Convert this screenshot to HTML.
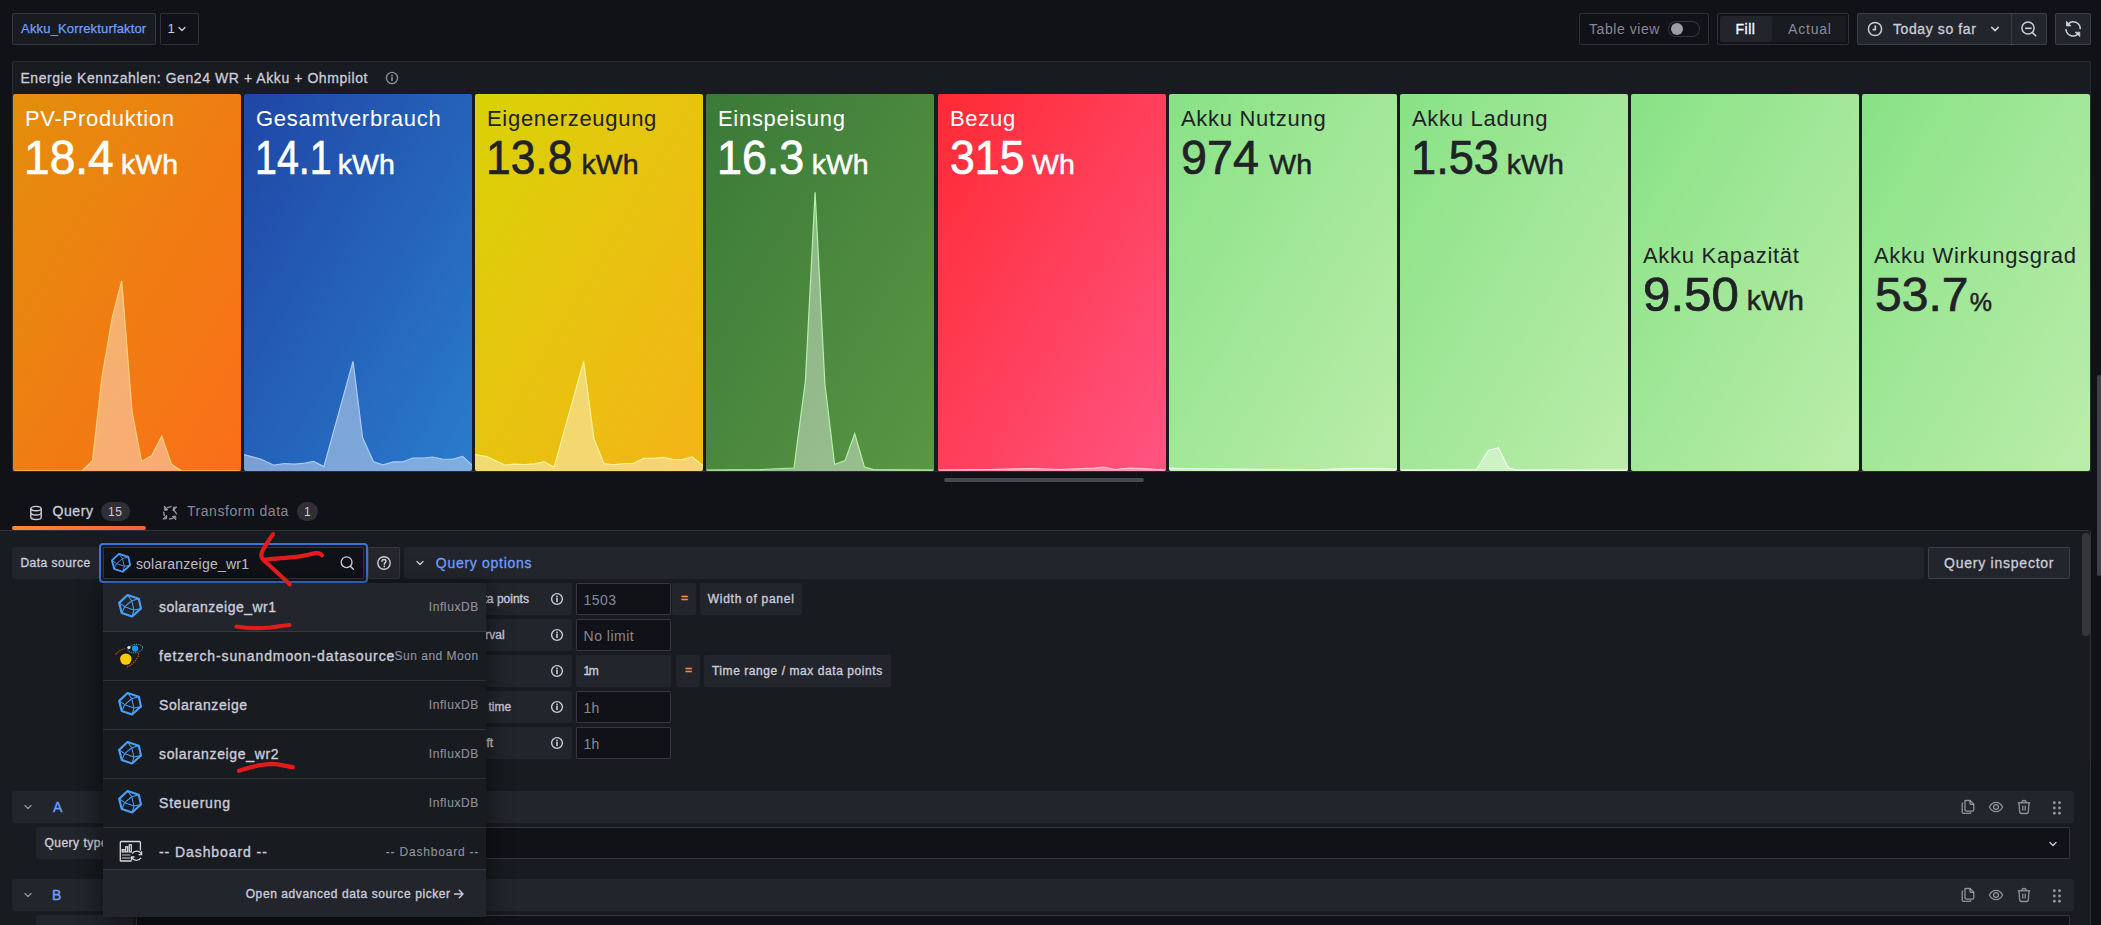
<!DOCTYPE html>
<html><head><meta charset="utf-8">
<style>
*{box-sizing:border-box;margin:0;padding:0}
html,body{width:2101px;height:925px;overflow:hidden;background:#111217;font-family:"Liberation Sans",sans-serif;color:#ccccdc}
.a{position:absolute}
.btn{position:absolute;border:1px solid rgba(204,204,220,0.16);border-radius:2px}
.stat{position:absolute;top:94px;height:377px;width:228px;border-radius:2px;overflow:hidden}
.stat .ti{position:absolute;left:12px;font-size:22px;letter-spacing:0.7px;white-space:nowrap}
.stat .va{position:absolute;font-size:48px;white-space:nowrap;transform-origin:0 0;-webkit-text-stroke:0.7px currentColor}
.stat .un{position:absolute;font-size:28.5px;white-space:nowrap;-webkit-text-stroke:0.5px currentColor}
.stat svg{position:absolute;left:0;top:0}
</style></head><body>
<div class="btn" style="left:12px;top:13px;width:144px;height:32px;background:#181b1f"></div>
<div class="a" style="left:21.10px;top:21.30px;font-size:13px;color:#6e9fff;white-space:nowrap;letter-spacing:0.158px;-webkit-text-stroke:0.25px #6e9fff;">Akku_Korrekturfaktor</div>
<div class="btn" style="left:160px;top:13px;width:39px;height:32px;background:#111217"></div>
<div class="a" style="left:167.60px;top:21.30px;font-size:13px;color:#ccccdc;white-space:nowrap;">1</div>
<div class="a" style="left:12px;top:61px;width:2079px;height:411px;background:#181b1f;border:1px solid rgba(204,204,220,0.10);border-radius:2px"></div>
<div class="a" style="left:20.40px;top:70.20px;font-size:14px;color:#ccccdc;white-space:nowrap;letter-spacing:0.569px;-webkit-text-stroke:0.3px #ccccdc;">Energie Kennzahlen: Gen24 WR + Akku + Ohmpilot</div>
<div class="btn" style="left:1579px;top:13px;width:130px;height:32px"></div>
<div class="a" style="left:1589.00px;top:21.00px;font-size:14px;color:rgba(204,204,220,0.65);white-space:nowrap;letter-spacing:0.556px;">Table view</div>
<div class="a" style="left:1668px;top:21px;width:32px;height:16px;border:1px solid rgba(204,204,220,0.2);border-radius:8px;background:#111217"></div>
<div class="a" style="left:1671px;top:23px;width:12px;height:12px;border-radius:6px;background:#9d9da8"></div>
<div class="btn" style="left:1717px;top:13px;width:132px;height:32px"></div>
<div class="a" style="left:1720px;top:16px;width:126px;height:26px;background:#181b1f;border-radius:2px"></div>
<div class="a" style="left:1720px;top:16px;width:52px;height:26px;background:#22252b;border-radius:2px"></div>
<div class="a" style="left:1735.60px;top:21.00px;font-size:14px;color:#ffffff;white-space:nowrap;letter-spacing:0.467px;-webkit-text-stroke:0.3px #ffffff;">Fill</div>
<div class="a" style="left:1788.00px;top:21.00px;font-size:14px;color:rgba(204,204,220,0.65);white-space:nowrap;letter-spacing:0.800px;">Actual</div>
<div class="btn" style="left:1857px;top:13px;width:190px;height:32px;background:#22252b"></div>
<div class="a" style="left:2011px;top:13px;width:1px;height:32px;background:rgba(204,204,220,0.12)"></div>
<div class="a" style="left:1893.00px;top:20.70px;font-size:14px;color:#ccccdc;white-space:nowrap;letter-spacing:0.600px;-webkit-text-stroke:0.3px #ccccdc;">Today so far</div>
<div class="btn" style="left:2055px;top:13px;width:36px;height:32px;background:#22252b"></div>
<div class="a" style="left:2097px;top:375px;width:4px;height:201px;border-radius:2px;background:rgba(204,204,220,0.25)"></div>
<div class="a" style="left:944px;top:478px;width:200px;height:4px;border-radius:2px;background:#47484d"></div>
<div class="stat" style="left:13px;background:linear-gradient(120deg,#e38e0b,#fb6e19)"><svg width="228" height="377"><polygon points="-1.0,377 -1.0,377.0 69.0,377.0 79.5,366.8 89.0,282.8 99.4,222.8 108.7,186.8 119.0,317.0 128.5,367.4 138.8,361.6 148.8,342.0 158.4,370.2 168.6,377.0 229.0,377.0 229.0,377" fill="rgba(255,255,255,0.4)"/><polyline points="-1.0,377.0 69.0,377.0 79.5,366.8 89.0,282.8 99.4,222.8 108.7,186.8 119.0,317.0 128.5,367.4 138.8,361.6 148.8,342.0 158.4,370.2 168.6,377.0 229.0,377.0" fill="none" stroke="#ffd27a" stroke-width="1.2"/></svg><div class="ti" style="top:12px;color:#fff">PV-Produktion</div><div class="va" style="left:10.62px;top:36.20px;color:#fff;transform:scaleX(0.9607)">18.4</div><div class="un" style="left:108.00px;top:53.91px;color:#fff;font-size:28.5px">kWh</div></div>
<div class="stat" style="left:244px;background:linear-gradient(120deg,#1f46a6,#2a7ccd)"><svg width="228" height="377"><polygon points="-1.0,377 -1.0,360.6 0.0,360.6 16.5,365.0 30.0,371.2 40.4,369.5 50.7,370.2 61.0,369.2 69.6,367.5 79.9,372.6 109.0,267.4 118.6,343.8 129.5,367.8 139.0,370.9 149.4,367.8 158.7,367.8 169.0,364.0 179.2,364.0 188.5,363.0 198.0,365.0 208.4,365.4 218.6,362.3 228.2,371.2 229.0,371.2 229.0,377" fill="rgba(255,255,255,0.4)"/><polyline points="-1.0,360.6 0.0,360.6 16.5,365.0 30.0,371.2 40.4,369.5 50.7,370.2 61.0,369.2 69.6,367.5 79.9,372.6 109.0,267.4 118.6,343.8 129.5,367.8 139.0,370.9 149.4,367.8 158.7,367.8 169.0,364.0 179.2,364.0 188.5,363.0 198.0,365.0 208.4,365.4 218.6,362.3 228.2,371.2 229.0,371.2" fill="none" stroke="#a9cdfb" stroke-width="1.2"/></svg><div class="ti" style="top:12px;color:#fff">Gesamtverbrauch</div><div class="va" style="left:10.54px;top:36.20px;color:#fff;transform:scaleX(0.8216)">14.1</div><div class="un" style="left:93.80px;top:53.91px;color:#fff;font-size:28.5px">kWh</div></div>
<div class="stat" style="left:475px;background:linear-gradient(120deg,#d9d206,#f5b418)"><svg width="228" height="377"><polygon points="-1.0,377 -1.0,360.6 0.3,360.6 11.7,362.6 30.5,371.2 39.0,370.2 49.3,370.5 59.6,369.8 69.2,367.8 79.1,373.3 108.6,267.4 118.9,344.5 128.8,369.5 138.4,370.9 148.7,369.5 158.3,369.5 168.6,364.4 178.9,364.4 188.1,363.3 197.7,365.4 207.0,365.7 217.2,363.0 227.5,371.2 229.0,371.2 229.0,377" fill="rgba(255,255,255,0.4)"/><polyline points="-1.0,360.6 0.3,360.6 11.7,362.6 30.5,371.2 39.0,370.2 49.3,370.5 59.6,369.8 69.2,367.8 79.1,373.3 108.6,267.4 118.9,344.5 128.8,369.5 138.4,370.9 148.7,369.5 158.3,369.5 168.6,364.4 178.9,364.4 188.1,363.3 197.7,365.4 207.0,365.7 217.2,363.0 227.5,371.2 229.0,371.2" fill="none" stroke="#fff39a" stroke-width="1.2"/></svg><div class="ti" style="top:12px;color:#202226">Eigenerzeugung</div><div class="va" style="left:11.13px;top:36.20px;color:#202226;transform:scaleX(0.9236)">13.8</div><div class="un" style="left:106.50px;top:53.91px;color:#202226;font-size:28.5px">kWh</div></div>
<div class="stat" style="left:706px;background:linear-gradient(120deg,#3a7a38,#5a9644)"><svg width="228" height="377"><polygon points="-1.0,377 -1.0,376.0 0.0,376.0 54.0,375.6 88.0,374.0 99.4,287.0 109.1,98.3 118.9,290.3 128.6,370.5 139.0,366.6 148.7,339.6 158.4,373.0 167.5,375.6 228.0,376.0 229.0,376.0 229.0,377" fill="rgba(255,255,255,0.4)"/><polyline points="-1.0,376.0 0.0,376.0 54.0,375.6 88.0,374.0 99.4,287.0 109.1,98.3 118.9,290.3 128.6,370.5 139.0,366.6 148.7,339.6 158.4,373.0 167.5,375.6 228.0,376.0 229.0,376.0" fill="none" stroke="#b4f2a8" stroke-width="1.2"/></svg><div class="ti" style="top:12px;color:#fff">Einspeisung</div><div class="va" style="left:10.80px;top:36.20px;color:#fff;transform:scaleX(0.9337)">16.3</div><div class="un" style="left:105.70px;top:53.91px;color:#fff;font-size:28.5px">kWh</div></div>
<div class="stat" style="left:938px;background:linear-gradient(120deg,#ff2a33,#ff5482)"><svg width="228" height="377"><polygon points="-1.0,377 -1.0,376.0 -1.0,376.0 52.0,375.5 92.0,374.5 122.0,375.5 157.0,374.0 165.0,373.0 177.0,375.5 192.0,374.0 212.0,375.0 228.0,376.0 229.0,376.0 229.0,377" fill="rgba(255,255,255,0.4)"/><polyline points="-1.0,376.0 -1.0,376.0 52.0,375.5 92.0,374.5 122.0,375.5 157.0,374.0 165.0,373.0 177.0,375.5 192.0,374.0 212.0,375.0 228.0,376.0 229.0,376.0" fill="none" stroke="#ffd0d8" stroke-width="1.2"/></svg><div class="ti" style="top:12px;color:#fff">Bezug</div><div class="va" style="left:11.64px;top:36.20px;color:#fff;transform:scaleX(0.9303)">315</div><div class="un" style="left:94.10px;top:53.91px;color:#fff;font-size:28.5px">Wh</div></div>
<div class="stat" style="left:1169px;background:linear-gradient(120deg,#88e286,#bcedaa)"><svg width="228" height="377"><polygon points="-1.0,377 -1.0,374.0 0.0,374.0 11.0,374.5 61.0,375.0 101.0,375.5 151.0,375.5 181.0,374.5 211.0,374.5 227.0,375.0 229.0,375.0 229.0,377" fill="rgba(255,255,255,0.4)"/><polyline points="-1.0,374.0 0.0,374.0 11.0,374.5 61.0,375.0 101.0,375.5 151.0,375.5 181.0,374.5 211.0,374.5 227.0,375.0 229.0,375.0" fill="none" stroke="#f4fff0" stroke-width="1.2"/></svg><div class="ti" style="top:12px;color:#202226">Akku Nutzung</div><div class="va" style="left:12.15px;top:36.20px;color:#202226;transform:scaleX(0.9727)">974</div><div class="un" style="left:100.30px;top:53.91px;color:#202226;font-size:28.5px">Wh</div></div>
<div class="stat" style="left:1400px;background:linear-gradient(120deg,#88e286,#bcedaa)"><svg width="228" height="377"><polygon points="-1.0,377 -1.0,376.2 0.0,376.2 20.0,376.2 76.7,375.5 88.4,356.2 98.4,353.9 108.4,373.9 116.8,376.2 227.0,376.2 229.0,376.2 229.0,377" fill="rgba(255,255,255,0.4)"/><polyline points="-1.0,376.2 0.0,376.2 20.0,376.2 76.7,375.5 88.4,356.2 98.4,353.9 108.4,373.9 116.8,376.2 227.0,376.2 229.0,376.2" fill="none" stroke="#f4fff0" stroke-width="1.2"/></svg><div class="ti" style="top:12px;color:#202226">Akku Ladung</div><div class="va" style="left:10.68px;top:36.20px;color:#202226;transform:scaleX(0.9416)">1.53</div><div class="un" style="left:106.80px;top:53.91px;color:#202226;font-size:28.5px">kWh</div></div>
<div class="stat" style="left:1631px;background:linear-gradient(120deg,#88e286,#bcedaa)"><div class="ti" style="top:149px;color:#202226">Akku Kapazität</div><div class="va" style="left:12.15px;top:172.70px;color:#202226;transform:scaleX(1.0267)">9.50</div><div class="un" style="left:115.80px;top:190.41px;color:#202226;font-size:28.5px">kWh</div></div>
<div class="stat" style="left:1862px;background:linear-gradient(120deg,#88e286,#bcedaa)"><div class="ti" style="top:149px;color:#202226">Akku Wirkungsgrad</div><div class="va" style="left:13.10px;top:172.80px;color:#202226;transform:scaleX(1.0000)">53.7</div><div class="un" style="left:107.80px;top:193.68px;color:#202226;font-size:25px">%</div></div>
<div class="a" style="left:0;top:530px;width:2091px;height:395px;background:#181b1f;border-top:1px solid rgba(204,204,220,0.12);border-right:1px solid rgba(204,204,220,0.12);border-top-right-radius:2px"></div>
<div class="a" style="left:12px;top:526px;width:134px;height:4px;border-radius:2px;background:linear-gradient(90deg,#ff8833,#f55f3e)"></div>
<div class="a" style="left:52.40px;top:502.50px;font-size:14px;color:#ccccdc;white-space:nowrap;letter-spacing:0.600px;-webkit-text-stroke:0.3px #ccccdc;">Query</div>
<div class="a" style="left:101px;top:502px;width:29px;height:19px;border-radius:10px;background:rgba(204,204,220,0.16)"></div>
<div class="a" style="left:108.00px;top:505.40px;font-size:12px;color:#ccccdc;white-space:nowrap;letter-spacing:0.500px;">15</div>
<div class="a" style="left:187.00px;top:502.50px;font-size:14px;color:rgba(204,204,220,0.65);white-space:nowrap;letter-spacing:0.538px;">Transform data</div>
<div class="a" style="left:297px;top:502px;width:21px;height:19px;border-radius:10px;background:rgba(204,204,220,0.16)"></div>
<div class="a" style="left:304.00px;top:505.40px;font-size:12px;color:#ccccdc;white-space:nowrap;">1</div>
<div class="a" style="left:12px;top:547px;width:87px;height:32px;background:#22252b;border-radius:2px"></div>
<div class="a" style="left:20.40px;top:556.00px;font-size:12px;color:#ccccdc;white-space:nowrap;letter-spacing:0.500px;-webkit-text-stroke:0.35px #ccccdc;">Data source</div>
<div class="a" style="left:99px;top:543px;width:269px;height:40px;border:2px solid #3d71d9;border-radius:4px"></div>
<div class="a" style="left:103px;top:547px;width:261px;height:32px;background:#111217;border:1px solid rgba(204,204,220,0.2);border-radius:2px"></div>
<div class="a" style="left:135.90px;top:555.60px;font-size:14px;color:#c0c0cc;white-space:nowrap;letter-spacing:0.220px;">solaranzeige_wr1</div>
<div class="btn" style="left:368px;top:547px;width:32px;height:32px;background:#25272d;border-color:rgba(204,204,220,0.10)"></div>
<div class="a" style="left:404px;top:547px;width:1520px;height:32px;background:#22252b;border-radius:2px"></div>
<div class="a" style="left:435.80px;top:555.00px;font-size:14px;color:#6e9fff;white-space:nowrap;letter-spacing:0.717px;-webkit-text-stroke:0.3px #6e9fff;">Query options</div>
<div class="btn" style="left:1928px;top:547px;width:142px;height:32px;background:#22252b"></div>
<div class="a" style="left:1944.00px;top:555.00px;font-size:14px;color:#ccccdc;white-space:nowrap;letter-spacing:0.764px;-webkit-text-stroke:0.3px #ccccdc;">Query inspector</div>
<div class="a" style="left:2082px;top:533px;width:8px;height:103px;border-radius:4px;background:rgba(204,204,220,0.16)"></div>
<div class="a" style="left:404px;top:583px;width:168px;height:32px;background:#22252b;border-radius:2px"></div>
<div class="a" style="left:444.20px;top:592.20px;font-size:12px;color:#ccccdc;white-space:nowrap;-webkit-text-stroke:0.35px #ccccdc;">Max data points</div>
<div class="a" style="left:576px;top:583px;width:95px;height:32px;background:#111217;border:1px solid rgba(204,204,220,0.2);border-radius:2px"></div>
<div class="a" style="left:583.60px;top:591.50px;font-size:14px;color:rgba(204,204,220,0.65);white-space:nowrap;letter-spacing:0.433px;">1503</div>
<div class="a" style="left:672px;top:583px;width:24px;height:32px;background:#22252b;border-radius:2px"></div>
<div class="a" style="left:681.00px;top:591.20px;font-size:12px;color:#ff8833;white-space:nowrap;-webkit-text-stroke:0.4px #ff8833;">=</div>
<div class="a" style="left:700px;top:583px;width:102px;height:32px;background:#22252b;border-radius:2px"></div>
<div class="a" style="left:707.80px;top:592.20px;font-size:12px;color:#ccccdc;white-space:nowrap;letter-spacing:0.715px;-webkit-text-stroke:0.35px #ccccdc;">Width of panel</div>
<div class="a" style="left:404px;top:619px;width:168px;height:32px;background:#22252b;border-radius:2px"></div>
<div class="a" style="left:443.30px;top:628.20px;font-size:12px;color:#ccccdc;white-space:nowrap;-webkit-text-stroke:0.35px #ccccdc;">Min interval</div>
<div class="a" style="left:576px;top:619px;width:95px;height:32px;background:#111217;border:1px solid rgba(204,204,220,0.2);border-radius:2px"></div>
<div class="a" style="left:583.60px;top:627.50px;font-size:14px;color:rgba(204,204,220,0.65);white-space:nowrap;letter-spacing:0.486px;">No limit</div>
<div class="a" style="left:404px;top:655px;width:168px;height:32px;background:#22252b;border-radius:2px"></div>
<div class="a" style="left:441.00px;top:664.20px;font-size:12px;color:#ccccdc;white-space:nowrap;-webkit-text-stroke:0.35px #ccccdc;">Interval</div>
<div class="a" style="left:576px;top:655px;width:95px;height:32px;background:#22252b;border-radius:2px"></div>
<div class="a" style="left:583.50px;top:664.20px;font-size:12px;color:#ccccdc;white-space:nowrap;letter-spacing:-1.500px;-webkit-text-stroke:0.35px #ccccdc;">1m</div>
<div class="a" style="left:676px;top:655px;width:24px;height:32px;background:#22252b;border-radius:2px"></div>
<div class="a" style="left:685.00px;top:663.20px;font-size:12px;color:#ff8833;white-space:nowrap;-webkit-text-stroke:0.4px #ff8833;">=</div>
<div class="a" style="left:704px;top:655px;width:187px;height:32px;background:#22252b;border-radius:2px"></div>
<div class="a" style="left:711.90px;top:664.20px;font-size:12px;color:#ccccdc;white-space:nowrap;letter-spacing:0.567px;-webkit-text-stroke:0.35px #ccccdc;">Time range / max data points</div>
<div class="a" style="left:404px;top:691px;width:168px;height:32px;background:#22252b;border-radius:2px"></div>
<div class="a" style="left:441.80px;top:700.20px;font-size:12px;color:#ccccdc;white-space:nowrap;-webkit-text-stroke:0.35px #ccccdc;">Relative time</div>
<div class="a" style="left:576px;top:691px;width:95px;height:32px;background:#111217;border:1px solid rgba(204,204,220,0.2);border-radius:2px"></div>
<div class="a" style="left:583.60px;top:699.50px;font-size:14px;color:rgba(204,204,220,0.65);white-space:nowrap;">1h</div>
<div class="a" style="left:404px;top:727px;width:168px;height:32px;background:#22252b;border-radius:2px"></div>
<div class="a" style="left:441.50px;top:736.20px;font-size:12px;color:#ccccdc;white-space:nowrap;-webkit-text-stroke:0.35px #ccccdc;">Time shift</div>
<div class="a" style="left:576px;top:727px;width:95px;height:32px;background:#111217;border:1px solid rgba(204,204,220,0.2);border-radius:2px"></div>
<div class="a" style="left:583.60px;top:735.50px;font-size:14px;color:rgba(204,204,220,0.65);white-space:nowrap;">1h</div>
<div class="a" style="left:12px;top:791px;width:2062px;height:32px;background:#22252b;border-radius:2px"></div>
<div class="a" style="left:53.00px;top:798.90px;font-size:14px;color:#6e9fff;white-space:nowrap;-webkit-text-stroke:0.4px #6e9fff;">A</div>
<div class="a" style="left:36px;top:827px;width:97px;height:32px;background:#22252b;border-radius:2px"></div>
<div class="a" style="left:136px;top:827px;width:1934px;height:32px;background:#111217;border:1px solid rgba(204,204,220,0.2);border-radius:2px"></div>
<div class="a" style="left:12px;top:879px;width:2062px;height:32px;background:#22252b;border-radius:2px"></div>
<div class="a" style="left:52.00px;top:886.80px;font-size:14px;color:#6e9fff;white-space:nowrap;-webkit-text-stroke:0.4px #6e9fff;">B</div>
<div class="a" style="left:36px;top:915px;width:97px;height:32px;background:#22252b;border-radius:2px"></div>
<div class="a" style="left:136px;top:915px;width:1934px;height:32px;background:#111217;border:1px solid rgba(204,204,220,0.2);border-radius:2px"></div>
<div class="a" style="left:44.40px;top:836.00px;font-size:12px;color:#ccccdc;white-space:nowrap;letter-spacing:0.511px;-webkit-text-stroke:0.35px #ccccdc;">Query type</div>
<div class="a" style="left:103px;top:583px;width:383px;height:334px;background:#181b1f;box-shadow:0 4px 24px rgba(0,0,0,0.6);overflow:hidden;border-radius:2px">
<div class="a" style="left:0;top:0px;width:383px;height:49px;background:#22252b;border-bottom:1px solid rgba(204,204,220,0.12)"></div>
<svg class="a" style="left:15px;top:11px" width="24" height="24" viewBox="-0.5 -0.5 21 21" fill="none"><polygon points="7.9,0.4 17.7,3.6 19.6,12.2 11.8,19.2 2.8,16.1 0.5,7.3" stroke="#4a9ff5" stroke-width="1.9" stroke-linejoin="round"/><line x1="7.9" y1="0.4" x2="11.5" y2="5.4" stroke="#4a9ff5" stroke-width="0.9"/><line x1="17.7" y1="3.6" x2="11.5" y2="5.4" stroke="#4a9ff5" stroke-width="0.9"/><line x1="11.5" y1="5.4" x2="5.4" y2="10.6" stroke="#4a9ff5" stroke-width="0.9"/><line x1="11.5" y1="5.4" x2="13.5" y2="13.5" stroke="#4a9ff5" stroke-width="0.9"/><line x1="5.4" y1="10.6" x2="13.5" y2="13.5" stroke="#4a9ff5" stroke-width="0.9"/><line x1="0.5" y1="7.3" x2="5.4" y2="10.6" stroke="#4a9ff5" stroke-width="0.9"/><line x1="5.4" y1="10.6" x2="2.8" y2="16.1" stroke="#4a9ff5" stroke-width="0.9"/><line x1="13.5" y1="13.5" x2="19.6" y2="12.2" stroke="#4a9ff5" stroke-width="0.9"/><line x1="13.5" y1="13.5" x2="11.8" y2="19.2" stroke="#4a9ff5" stroke-width="0.9"/></svg>
<div class="a" style="left:56.00px;top:16.10px;font-size:14px;color:#ccccdc;white-space:nowrap;letter-spacing:0.487px;-webkit-text-stroke:0.35px #ccccdc;">solaranzeige_wr1</div>
<div class="a" style="left:325.70px;top:17.20px;font-size:12px;color:rgba(204,204,220,0.65);white-space:nowrap;letter-spacing:0.614px;-webkit-text-stroke:0.15px rgba(204,204,220,0.65);">InfluxDB</div>
<div class="a" style="left:0;top:49px;width:383px;height:49px;background:transparent;border-bottom:1px solid rgba(204,204,220,0.12)"></div>
<svg class="a" style="left:11px;top:57px" width="34" height="30" viewBox="0 0 34 30" fill="none"><path d="M1.6,14.3 C4,11.5 7,9.6 10.6,8.6" stroke="#c75a0a" stroke-width="1.2" stroke-dasharray="1.4 1.1"/><path d="M24.6,13.2 C24.5,18 20,24 12.3,27.6" stroke="#c75a0a" stroke-width="1.2" stroke-dasharray="1.4 1.1"/><ellipse cx="21.3" cy="8.6" rx="7.4" ry="4.1" transform="rotate(-10 21.3 8.6)" stroke="#3a8aa8" stroke-width="1.1" stroke-dasharray="1.3 0.9"/><circle cx="11.8" cy="19.1" r="5.7" fill="#ffcb00"/><circle cx="21.1" cy="8.6" r="3.1" fill="#0a9cf6"/><circle cx="14.9" cy="7.5" r="1.6" fill="#e8e8e8"/></svg>
<div class="a" style="left:56.00px;top:65.10px;font-size:14px;color:#ccccdc;white-space:nowrap;letter-spacing:0.897px;-webkit-text-stroke:0.35px #ccccdc;">fetzerch-sunandmoon-datasource</div>
<div class="a" style="left:291.60px;top:66.20px;font-size:12px;color:rgba(204,204,220,0.65);white-space:nowrap;letter-spacing:0.491px;-webkit-text-stroke:0.15px rgba(204,204,220,0.65);">Sun and Moon</div>
<div class="a" style="left:0;top:98px;width:383px;height:49px;background:transparent;border-bottom:1px solid rgba(204,204,220,0.12)"></div>
<svg class="a" style="left:15px;top:109px" width="24" height="24" viewBox="-0.5 -0.5 21 21" fill="none"><polygon points="7.9,0.4 17.7,3.6 19.6,12.2 11.8,19.2 2.8,16.1 0.5,7.3" stroke="#4a9ff5" stroke-width="1.9" stroke-linejoin="round"/><line x1="7.9" y1="0.4" x2="11.5" y2="5.4" stroke="#4a9ff5" stroke-width="0.9"/><line x1="17.7" y1="3.6" x2="11.5" y2="5.4" stroke="#4a9ff5" stroke-width="0.9"/><line x1="11.5" y1="5.4" x2="5.4" y2="10.6" stroke="#4a9ff5" stroke-width="0.9"/><line x1="11.5" y1="5.4" x2="13.5" y2="13.5" stroke="#4a9ff5" stroke-width="0.9"/><line x1="5.4" y1="10.6" x2="13.5" y2="13.5" stroke="#4a9ff5" stroke-width="0.9"/><line x1="0.5" y1="7.3" x2="5.4" y2="10.6" stroke="#4a9ff5" stroke-width="0.9"/><line x1="5.4" y1="10.6" x2="2.8" y2="16.1" stroke="#4a9ff5" stroke-width="0.9"/><line x1="13.5" y1="13.5" x2="19.6" y2="12.2" stroke="#4a9ff5" stroke-width="0.9"/><line x1="13.5" y1="13.5" x2="11.8" y2="19.2" stroke="#4a9ff5" stroke-width="0.9"/></svg>
<div class="a" style="left:56.00px;top:114.10px;font-size:14px;color:#ccccdc;white-space:nowrap;letter-spacing:0.582px;-webkit-text-stroke:0.35px #ccccdc;">Solaranzeige</div>
<div class="a" style="left:325.70px;top:115.20px;font-size:12px;color:rgba(204,204,220,0.65);white-space:nowrap;letter-spacing:0.614px;-webkit-text-stroke:0.15px rgba(204,204,220,0.65);">InfluxDB</div>
<div class="a" style="left:0;top:147px;width:383px;height:49px;background:transparent;border-bottom:1px solid rgba(204,204,220,0.12)"></div>
<svg class="a" style="left:15px;top:158px" width="24" height="24" viewBox="-0.5 -0.5 21 21" fill="none"><polygon points="7.9,0.4 17.7,3.6 19.6,12.2 11.8,19.2 2.8,16.1 0.5,7.3" stroke="#4a9ff5" stroke-width="1.9" stroke-linejoin="round"/><line x1="7.9" y1="0.4" x2="11.5" y2="5.4" stroke="#4a9ff5" stroke-width="0.9"/><line x1="17.7" y1="3.6" x2="11.5" y2="5.4" stroke="#4a9ff5" stroke-width="0.9"/><line x1="11.5" y1="5.4" x2="5.4" y2="10.6" stroke="#4a9ff5" stroke-width="0.9"/><line x1="11.5" y1="5.4" x2="13.5" y2="13.5" stroke="#4a9ff5" stroke-width="0.9"/><line x1="5.4" y1="10.6" x2="13.5" y2="13.5" stroke="#4a9ff5" stroke-width="0.9"/><line x1="0.5" y1="7.3" x2="5.4" y2="10.6" stroke="#4a9ff5" stroke-width="0.9"/><line x1="5.4" y1="10.6" x2="2.8" y2="16.1" stroke="#4a9ff5" stroke-width="0.9"/><line x1="13.5" y1="13.5" x2="19.6" y2="12.2" stroke="#4a9ff5" stroke-width="0.9"/><line x1="13.5" y1="13.5" x2="11.8" y2="19.2" stroke="#4a9ff5" stroke-width="0.9"/></svg>
<div class="a" style="left:56.00px;top:163.10px;font-size:14px;color:#ccccdc;white-space:nowrap;letter-spacing:0.653px;-webkit-text-stroke:0.35px #ccccdc;">solaranzeige_wr2</div>
<div class="a" style="left:325.70px;top:164.20px;font-size:12px;color:rgba(204,204,220,0.65);white-space:nowrap;letter-spacing:0.614px;-webkit-text-stroke:0.15px rgba(204,204,220,0.65);">InfluxDB</div>
<div class="a" style="left:0;top:196px;width:383px;height:49px;background:transparent;border-bottom:1px solid rgba(204,204,220,0.12)"></div>
<svg class="a" style="left:15px;top:207px" width="24" height="24" viewBox="-0.5 -0.5 21 21" fill="none"><polygon points="7.9,0.4 17.7,3.6 19.6,12.2 11.8,19.2 2.8,16.1 0.5,7.3" stroke="#4a9ff5" stroke-width="1.9" stroke-linejoin="round"/><line x1="7.9" y1="0.4" x2="11.5" y2="5.4" stroke="#4a9ff5" stroke-width="0.9"/><line x1="17.7" y1="3.6" x2="11.5" y2="5.4" stroke="#4a9ff5" stroke-width="0.9"/><line x1="11.5" y1="5.4" x2="5.4" y2="10.6" stroke="#4a9ff5" stroke-width="0.9"/><line x1="11.5" y1="5.4" x2="13.5" y2="13.5" stroke="#4a9ff5" stroke-width="0.9"/><line x1="5.4" y1="10.6" x2="13.5" y2="13.5" stroke="#4a9ff5" stroke-width="0.9"/><line x1="0.5" y1="7.3" x2="5.4" y2="10.6" stroke="#4a9ff5" stroke-width="0.9"/><line x1="5.4" y1="10.6" x2="2.8" y2="16.1" stroke="#4a9ff5" stroke-width="0.9"/><line x1="13.5" y1="13.5" x2="19.6" y2="12.2" stroke="#4a9ff5" stroke-width="0.9"/><line x1="13.5" y1="13.5" x2="11.8" y2="19.2" stroke="#4a9ff5" stroke-width="0.9"/></svg>
<div class="a" style="left:56.00px;top:212.10px;font-size:14px;color:#ccccdc;white-space:nowrap;letter-spacing:0.812px;-webkit-text-stroke:0.35px #ccccdc;">Steuerung</div>
<div class="a" style="left:325.70px;top:213.20px;font-size:12px;color:rgba(204,204,220,0.65);white-space:nowrap;letter-spacing:0.614px;-webkit-text-stroke:0.15px rgba(204,204,220,0.65);">InfluxDB</div>
<div class="a" style="left:0;top:245px;width:383px;height:49px;background:transparent;border-bottom:1px solid rgba(204,204,220,0.12)"></div>
<svg class="a" style="left:16px;top:257px" width="24" height="24" viewBox="0 0 24 24" fill="none"><path d="M1.3,21.3 V2.5 C1.3,1.9 1.8,1.5 2.3,1.5 H20.5 C21,1.5 21.4,1.9 21.4,2.4 V10.5" stroke="#d8d8e0" stroke-width="1.3"/><line x1="1.3" y1="21" x2="12.5" y2="21" stroke="#d8d8e0" stroke-width="1.3"/><g stroke="#d8d8e0" stroke-width="1.3"><rect x="3.2" y="9.6" width="1.9" height="2.3"/><rect x="6.7" y="6.8" width="2" height="5.1"/><rect x="10.3" y="4.8" width="2" height="7.1"/></g><line x1="3" y1="15" x2="11.5" y2="15" stroke="#bbb" stroke-width="1.2"/><line x1="3" y1="18" x2="11.5" y2="18" stroke="#d8d8e0" stroke-width="1.2"/><path d="M13.2,13.6 A5.3,5.3 0 0 1 22.3,13.8" stroke="#d8d8e0" stroke-width="1.3"/><polyline points="22.6,11.3 22.6,14.6 19.6,14.6" stroke="#d8d8e0" stroke-width="1.3"/><path d="M21.9,17.8 A5.3,5.3 0 0 1 12.8,17.6" stroke="#d8d8e0" stroke-width="1.3"/><polyline points="12.5,20.4 12.5,17 15.5,17" stroke="#d8d8e0" stroke-width="1.3"/></svg>
<div class="a" style="left:56.00px;top:261.10px;font-size:14px;color:#ccccdc;white-space:nowrap;letter-spacing:0.921px;-webkit-text-stroke:0.35px #ccccdc;">-- Dashboard --</div>
<div class="a" style="left:282.80px;top:262.20px;font-size:12px;color:rgba(204,204,220,0.65);white-space:nowrap;letter-spacing:0.800px;-webkit-text-stroke:0.15px rgba(204,204,220,0.65);">-- Dashboard --</div>
<div class="a" style="left:0;top:286px;width:383px;height:48px;background:#22252b;border-top:1px solid rgba(204,204,220,0.12)"></div>
<div class="a" style="left:142.70px;top:304.00px;font-size:12px;color:#ccccdc;white-space:nowrap;letter-spacing:0.590px;-webkit-text-stroke:0.35px #ccccdc;">Open advanced data source picker</div>
<svg class="a" style="left:350px;top:305px" width="12" height="12" viewBox="0 0 12 12" fill="none"><path d="M1.5,6 H9.8 M6.3,2.3 L10,6 L6.3,9.7" stroke="#ccccdc" stroke-width="1.4" stroke-linecap="round" stroke-linejoin="round"/></svg>
</div>
<svg class="a" style="left:174px;top:21px" width="16" height="16" viewBox="0 0 16 16" fill="none"><polyline points="5.0,6.5 8,9.5 11.0,6.5" stroke="#ccccdc" stroke-width="1.3" stroke-linecap="round" stroke-linejoin="round"/></svg>
<svg class="a" style="left:384px;top:70px" width="16" height="16" viewBox="0 0 16 16" fill="none"><circle cx="8" cy="8" r="5.6" stroke="rgba(204,204,220,0.65)" stroke-width="1.4"/><line x1="8" y1="7.6" x2="8" y2="10.4" stroke="rgba(204,204,220,0.65)" stroke-width="1.6" stroke-linecap="round"/><circle cx="8" cy="5.5" r="0.9" fill="rgba(204,204,220,0.65)"/></svg>
<svg class="a" style="left:1867px;top:21px" width="16" height="16" viewBox="0 0 16 16" fill="none"><circle cx="8" cy="8" r="6.6" stroke="#ccccdc" stroke-width="1.5"/><polyline points="8.3,4.4 8.3,8.6 5.6,8.6" stroke="#ccccdc" stroke-width="1.7" stroke-linejoin="round"/></svg>
<svg class="a" style="left:1987px;top:21px" width="16" height="16" viewBox="0 0 16 16" fill="none"><polyline points="4.75,6.35 8,9.65 11.25,6.35" stroke="#ccccdc" stroke-width="1.5" stroke-linecap="round" stroke-linejoin="round"/></svg>
<svg class="a" style="left:2020px;top:20px" width="18" height="18" viewBox="0 0 18 18" fill="none"><circle cx="8" cy="8" r="6.1" stroke="#ccccdc" stroke-width="1.5"/><line x1="5" y1="8.3" x2="11.6" y2="8.3" stroke="#ccccdc" stroke-width="1.6"/><line x1="12.5" y1="12.6" x2="15.7" y2="15.8" stroke="#ccccdc" stroke-width="1.6" stroke-linecap="round"/></svg>
<svg class="a" style="left:2060px;top:16px" width="28" height="26" viewBox="0 0 28 26" fill="none"><path d="M8.25,7.85 A7,7 0 0 1 20.2,13.2" stroke="#ccccdc" stroke-width="1.5"/><path d="M5.9,13 A7.2,7.2 0 0 0 18.3,17.8" stroke="#ccccdc" stroke-width="1.5"/><polygon points="6.4,5.3 6.4,9.9 11,9.9" fill="#ccccdc" stroke="#ccccdc" stroke-width="0.8" stroke-linejoin="round"/><polygon points="19.8,20.6 19.8,16.2 15.2,16.2" fill="#ccccdc" stroke="#ccccdc" stroke-width="0.8" stroke-linejoin="round"/></svg>
<svg class="a" style="left:29px;top:505px" width="14" height="16" viewBox="0 0 14 16" fill="none"><ellipse cx="7" cy="3.6" rx="5.2" ry="2.2" stroke="#ccccdc" stroke-width="1.4"/><path d="M1.8,3.6 V12.2 C1.8,13.6 4,14.5 7,14.5 C10,14.5 12.2,13.6 12.2,12.2 V3.6" stroke="#ccccdc" stroke-width="1.4"/><path d="M1.8,7.8 C1.8,9.2 4,10 7,10 C10,10 12.2,9.2 12.2,7.8" stroke="#ccccdc" stroke-width="1.3"/><circle cx="3.8" cy="9" r="0.6" fill="#ccccdc"/><circle cx="3.8" cy="13" r="0.6" fill="#ccccdc"/></svg>
<svg class="a" style="left:158px;top:502px" width="24" height="22" viewBox="0 0 24 22" fill="none"><g stroke="rgba(204,204,220,0.65)" stroke-width="1.5" stroke-linecap="round" fill="rgba(204,204,220,0.65)"><line x1="9.5" y1="5.6" x2="13" y2="4.6"/><polygon points="6.6,4.2 9.8,7.8 6.9,8.4" stroke-width="0.9" stroke-linejoin="round"/><line x1="16" y1="8.2" x2="18.4" y2="11.6"/><polygon points="18.6,5.3 15,8.8 15.4,5.6" stroke-width="0.9" stroke-linejoin="round"/><line x1="5.6" y1="10.3" x2="6.4" y2="13.6"/><polygon points="5.2,16.8 8.8,13.3 8.5,16.6" stroke-width="0.9" stroke-linejoin="round"/><line x1="11.6" y1="17" x2="15" y2="16.2"/><polygon points="17.6,17.6 14.3,14.4 17.3,14" stroke-width="0.9" stroke-linejoin="round"/></g></svg>
<svg class="a" style="left:110.5px;top:552.5px" width="20" height="20" viewBox="-0.5 -0.5 21 21" fill="none"><polygon points="7.9,0.4 17.7,3.6 19.6,12.2 11.8,19.2 2.8,16.1 0.5,7.3" stroke="#4a9ff5" stroke-width="1.9" stroke-linejoin="round"/><line x1="7.9" y1="0.4" x2="11.5" y2="5.4" stroke="#4a9ff5" stroke-width="0.9"/><line x1="17.7" y1="3.6" x2="11.5" y2="5.4" stroke="#4a9ff5" stroke-width="0.9"/><line x1="11.5" y1="5.4" x2="5.4" y2="10.6" stroke="#4a9ff5" stroke-width="0.9"/><line x1="11.5" y1="5.4" x2="13.5" y2="13.5" stroke="#4a9ff5" stroke-width="0.9"/><line x1="5.4" y1="10.6" x2="13.5" y2="13.5" stroke="#4a9ff5" stroke-width="0.9"/><line x1="0.5" y1="7.3" x2="5.4" y2="10.6" stroke="#4a9ff5" stroke-width="0.9"/><line x1="5.4" y1="10.6" x2="2.8" y2="16.1" stroke="#4a9ff5" stroke-width="0.9"/><line x1="13.5" y1="13.5" x2="19.6" y2="12.2" stroke="#4a9ff5" stroke-width="0.9"/><line x1="13.5" y1="13.5" x2="11.8" y2="19.2" stroke="#4a9ff5" stroke-width="0.9"/></svg>
<svg class="a" style="left:339px;top:555px" width="16" height="16" viewBox="0 0 16 16" fill="none"><circle cx="7.6" cy="7.2" r="5.4" stroke="#ccccdc" stroke-width="1.3"/><line x1="11.6" y1="11.4" x2="14.4" y2="14.2" stroke="#ccccdc" stroke-width="1.4" stroke-linecap="round"/></svg>
<svg class="a" style="left:376px;top:555px" width="16" height="16" viewBox="0 0 16 16" fill="none"><circle cx="8" cy="8" r="6.2" stroke="#ccccdc" stroke-width="1.4"/><path d="M6,6.4 C6,5.1 7,4.5 8,4.5 C9.1,4.5 10,5.2 10,6.3 C10,7.6 8.3,7.7 8.3,9.2" stroke="#ccccdc" stroke-width="1.4" stroke-linecap="round"/><circle cx="8.3" cy="11.3" r="0.85" fill="#ccccdc"/></svg>
<svg class="a" style="left:412px;top:555px" width="16" height="16" viewBox="0 0 16 16" fill="none"><polyline points="5.0,6.5 8,9.5 11.0,6.5" stroke="#ccccdc" stroke-width="1.3" stroke-linecap="round" stroke-linejoin="round"/></svg>
<svg class="a" style="left:549px;top:591px" width="16" height="16" viewBox="0 0 16 16" fill="none"><circle cx="8" cy="8" r="5.4" stroke="#ccccdc" stroke-width="1.4"/><line x1="8" y1="7.6" x2="8" y2="10.4" stroke="#ccccdc" stroke-width="1.6" stroke-linecap="round"/><circle cx="8" cy="5.5" r="0.9" fill="#ccccdc"/></svg>
<svg class="a" style="left:549px;top:627px" width="16" height="16" viewBox="0 0 16 16" fill="none"><circle cx="8" cy="8" r="5.4" stroke="#ccccdc" stroke-width="1.4"/><line x1="8" y1="7.6" x2="8" y2="10.4" stroke="#ccccdc" stroke-width="1.6" stroke-linecap="round"/><circle cx="8" cy="5.5" r="0.9" fill="#ccccdc"/></svg>
<svg class="a" style="left:549px;top:663px" width="16" height="16" viewBox="0 0 16 16" fill="none"><circle cx="8" cy="8" r="5.4" stroke="#ccccdc" stroke-width="1.4"/><line x1="8" y1="7.6" x2="8" y2="10.4" stroke="#ccccdc" stroke-width="1.6" stroke-linecap="round"/><circle cx="8" cy="5.5" r="0.9" fill="#ccccdc"/></svg>
<svg class="a" style="left:549px;top:699px" width="16" height="16" viewBox="0 0 16 16" fill="none"><circle cx="8" cy="8" r="5.4" stroke="#ccccdc" stroke-width="1.4"/><line x1="8" y1="7.6" x2="8" y2="10.4" stroke="#ccccdc" stroke-width="1.6" stroke-linecap="round"/><circle cx="8" cy="5.5" r="0.9" fill="#ccccdc"/></svg>
<svg class="a" style="left:549px;top:735px" width="16" height="16" viewBox="0 0 16 16" fill="none"><circle cx="8" cy="8" r="5.4" stroke="#ccccdc" stroke-width="1.4"/><line x1="8" y1="7.6" x2="8" y2="10.4" stroke="#ccccdc" stroke-width="1.6" stroke-linecap="round"/><circle cx="8" cy="5.5" r="0.9" fill="#ccccdc"/></svg>
<svg class="a" style="left:20px;top:799px" width="16" height="16" viewBox="0 0 16 16" fill="none"><polyline points="5.0,6.5 8,9.5 11.0,6.5" stroke="rgba(204,204,220,0.65)" stroke-width="1.3" stroke-linecap="round" stroke-linejoin="round"/></svg>
<svg class="a" style="left:1960px;top:799px" width="16" height="16" viewBox="0 0 16 16" fill="none"><g stroke="rgba(204,204,220,0.65)" stroke-width="1.3" stroke-linejoin="round"><path d="M5,1.5 H10 L13.8,5.3 V10.8 C13.8,11.6 13.2,12.2 12.4,12.2 H6.4 C5.6,12.2 5,11.6 5,10.8 Z"/><path d="M3.3,3.8 C2.6,3.8 2.2,4.3 2.2,5 V13 C2.2,13.8 2.8,14.4 3.6,14.4 H9.5 C10.3,14.4 10.7,14 10.9,13.3"/><path d="M10,1.8 V4.6 C10,5 10.3,5.3 10.7,5.3 H13.5"/></g></svg>
<svg class="a" style="left:1988px;top:799px" width="16" height="16" viewBox="0 0 16 16" fill="none"><path d="M1.4,8 C3,4.9 5.3,3.3 8,3.3 C10.7,3.3 13,4.9 14.6,8 C13,11.1 10.7,12.7 8,12.7 C5.3,12.7 3,11.1 1.4,8 Z" stroke="rgba(204,204,220,0.65)" stroke-width="1.3"/><circle cx="8" cy="8" r="2.4" stroke="rgba(204,204,220,0.65)" stroke-width="1.3"/></svg>
<svg class="a" style="left:2016px;top:799px" width="16" height="16" viewBox="0 0 16 16" fill="none"><g stroke="rgba(204,204,220,0.65)" stroke-width="1.3" stroke-linejoin="round"><line x1="1.8" y1="3.8" x2="14.2" y2="3.8"/><path d="M5.8,3.6 C5.8,2.3 6.7,1.5 8,1.5 C9.3,1.5 10.2,2.3 10.2,3.6"/><path d="M3,3.8 L3.7,13.2 C3.8,14 4.3,14.5 5.1,14.5 H10.9 C11.7,14.5 12.2,14 12.3,13.2 L13,3.8"/><line x1="6.8" y1="6.7" x2="6.8" y2="11.6"/><line x1="9.2" y1="6.7" x2="9.2" y2="11.6"/></g></svg>
<svg class="a" style="left:2049px;top:799px" width="16" height="16" viewBox="0 0 16 16" fill="none"><circle cx="5.3" cy="3.8" r="1.45" fill="rgba(204,204,220,0.65)"/><circle cx="5.3" cy="9" r="1.45" fill="rgba(204,204,220,0.65)"/><circle cx="5.3" cy="14.2" r="1.45" fill="rgba(204,204,220,0.65)"/><circle cx="10.5" cy="3.8" r="1.45" fill="rgba(204,204,220,0.65)"/><circle cx="10.5" cy="9" r="1.45" fill="rgba(204,204,220,0.65)"/><circle cx="10.5" cy="14.2" r="1.45" fill="rgba(204,204,220,0.65)"/></svg>
<svg class="a" style="left:20px;top:887px" width="16" height="16" viewBox="0 0 16 16" fill="none"><polyline points="5.0,6.5 8,9.5 11.0,6.5" stroke="rgba(204,204,220,0.65)" stroke-width="1.3" stroke-linecap="round" stroke-linejoin="round"/></svg>
<svg class="a" style="left:1960px;top:887px" width="16" height="16" viewBox="0 0 16 16" fill="none"><g stroke="rgba(204,204,220,0.65)" stroke-width="1.3" stroke-linejoin="round"><path d="M5,1.5 H10 L13.8,5.3 V10.8 C13.8,11.6 13.2,12.2 12.4,12.2 H6.4 C5.6,12.2 5,11.6 5,10.8 Z"/><path d="M3.3,3.8 C2.6,3.8 2.2,4.3 2.2,5 V13 C2.2,13.8 2.8,14.4 3.6,14.4 H9.5 C10.3,14.4 10.7,14 10.9,13.3"/><path d="M10,1.8 V4.6 C10,5 10.3,5.3 10.7,5.3 H13.5"/></g></svg>
<svg class="a" style="left:1988px;top:887px" width="16" height="16" viewBox="0 0 16 16" fill="none"><path d="M1.4,8 C3,4.9 5.3,3.3 8,3.3 C10.7,3.3 13,4.9 14.6,8 C13,11.1 10.7,12.7 8,12.7 C5.3,12.7 3,11.1 1.4,8 Z" stroke="rgba(204,204,220,0.65)" stroke-width="1.3"/><circle cx="8" cy="8" r="2.4" stroke="rgba(204,204,220,0.65)" stroke-width="1.3"/></svg>
<svg class="a" style="left:2016px;top:887px" width="16" height="16" viewBox="0 0 16 16" fill="none"><g stroke="rgba(204,204,220,0.65)" stroke-width="1.3" stroke-linejoin="round"><line x1="1.8" y1="3.8" x2="14.2" y2="3.8"/><path d="M5.8,3.6 C5.8,2.3 6.7,1.5 8,1.5 C9.3,1.5 10.2,2.3 10.2,3.6"/><path d="M3,3.8 L3.7,13.2 C3.8,14 4.3,14.5 5.1,14.5 H10.9 C11.7,14.5 12.2,14 12.3,13.2 L13,3.8"/><line x1="6.8" y1="6.7" x2="6.8" y2="11.6"/><line x1="9.2" y1="6.7" x2="9.2" y2="11.6"/></g></svg>
<svg class="a" style="left:2049px;top:887px" width="16" height="16" viewBox="0 0 16 16" fill="none"><circle cx="5.3" cy="3.8" r="1.45" fill="rgba(204,204,220,0.65)"/><circle cx="5.3" cy="9" r="1.45" fill="rgba(204,204,220,0.65)"/><circle cx="5.3" cy="14.2" r="1.45" fill="rgba(204,204,220,0.65)"/><circle cx="10.5" cy="3.8" r="1.45" fill="rgba(204,204,220,0.65)"/><circle cx="10.5" cy="9" r="1.45" fill="rgba(204,204,220,0.65)"/><circle cx="10.5" cy="14.2" r="1.45" fill="rgba(204,204,220,0.65)"/></svg>
<svg class="a" style="left:2045px;top:836px" width="16" height="16" viewBox="0 0 16 16" fill="none"><polyline points="5.0,6.5 8,9.5 11.0,6.5" stroke="#ccccdc" stroke-width="1.3" stroke-linecap="round" stroke-linejoin="round"/></svg>
<svg class="a" style="left:0;top:0" width="2101" height="925" fill="none"><path d="M273.1,534.1 C269,540 264,547 261.8,552.5 C260.5,556 262,559 265,561.5 C272,567.5 281,576 289.7,584.2" stroke="#e41b1b" stroke-width="4.2" stroke-linecap="round" stroke-linejoin="round"/><path d="M265.5,559.5 C275,558.5 286,557.8 296,556.8 C304,556 310,554 316,553.2 C319,553 321,554 322,555.3" stroke="#e41b1b" stroke-width="4.2" stroke-linecap="round"/><path d="M236.5,626.5 C245,628 258,628.5 270,627.5 C278,626.5 284,625.5 289.5,625" stroke="#e41b1b" stroke-width="4.2" stroke-linecap="round"/><path d="M239,770.8 C249,767.5 260,764 272,763.8 C280,764 287,766.5 292.8,767.2" stroke="#e41b1b" stroke-width="4.2" stroke-linecap="round"/></svg>
</body></html>
